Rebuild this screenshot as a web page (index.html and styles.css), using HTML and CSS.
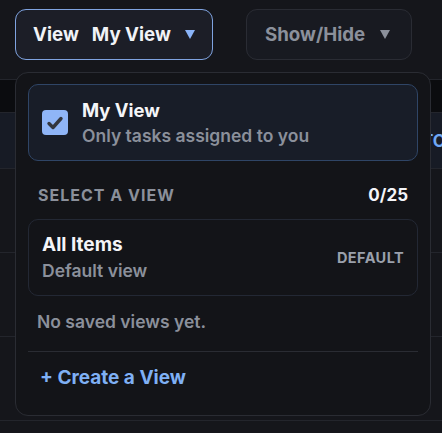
FILE: index.html
```html
<!DOCTYPE html>
<html lang="en">
<head>
    <meta charset="UTF-8">
    <meta name="viewport" content="width=device-width, initial-scale=1.0">
    <title>Views</title>
    <link rel="stylesheet" href="styles.css">
</head>
<body>
    <div class="page">
        <div class="toolbar">
            <button class="tool-button view-button">
                <span class="label">View</span>
                <span class="label">My View</span>
                <span class="caret blue"></span>
            </button>
            <button class="tool-button show-button">
                <span class="label">Show/Hide</span>
                <span class="caret"></span>
            </button>
        </div>

        <div class="table">
            <div class="table-head"></div>
            <div class="table-row active"><span class="status">TO</span></div>
            <div class="table-row"></div>
            <div class="table-row"></div>
            <div class="table-row"></div>
        </div>

        <div class="menu">
            <div class="current-view">
                <span class="checkbox">
                    <svg width="18" height="16" viewBox="0 0 18 16">
                        <path d="M3 8.5 L7 12.5 L15 3.5" fill="none" stroke="#33363e" stroke-width="3.4" stroke-linecap="round" stroke-linejoin="round"/>
                    </svg>
                </span>
                <div class="view-text">
                    <div class="view-title">My View</div>
                    <div class="view-sub">Only tasks assigned to you</div>
                </div>
            </div>

            <div class="section-head">
                <span class="section-title">SELECT A VIEW</span>
                <span class="count">0/25</span>
            </div>

            <div class="view-card">
                <div class="view-text">
                    <div class="view-title">All Items</div>
                    <div class="view-sub">Default view</div>
                </div>
                <span class="tag">DEFAULT</span>
            </div>

            <div class="empty">No saved views yet.</div>

            <div class="menu-footer">
                <a class="create-link">+ Create a View</a>
            </div>
        </div>
    </div>
</body>
</html>
```

FILE: styles.css
```css
body {
    margin: 0;
    background: #15161b;
    font-family: Inter, "Noto Sans", sans-serif;
    height: 433px;
    overflow: hidden;
}

.page {
    position: relative;
}

.toolbar {
    display: flex;
    gap: 33px;
    padding: 9px 15px 0;
    height: 51px;
}

.tool-button {
    display: flex;
    align-items: center;
    height: 51px;
    border-radius: 11px;
    font-family: inherit;
    font-size: 18.7px;
    font-weight: 700;
    cursor: pointer;
}

.view-button {
    width: 198px;
    padding: 0 0 0 17px;
    gap: 13px;
    background: #1c1e27;
    border: 1px solid #7fa3e0;
    color: #f1f3f7;
}

.show-button {
    width: 166px;
    padding: 0 0 0 18px;
    gap: 15px;
    background: #181a21;
    border: 1px solid #2a2c34;
    color: #8b909b;
}

.caret {
    width: 0;
    height: 0;
    border-left: 5px solid transparent;
    border-right: 5px solid transparent;
    border-top: 9px solid #8b909b;
}

.caret.blue {
    border-top-color: #8ab4f8;
    margin-left: 1px;
}

.table {
    margin-top: 19px;
    border-top: 1px solid #23252c;
}

.table-head {
    height: 32px;
    background: #0b0c0f;
    border-bottom: 1px solid #23252c;
}

.table-row {
    height: 83px;
    border-bottom: 1px solid #23252c;
    position: relative;
}

.table-row.active {
    height: 55px;
    background: #171b25;
}

.status {
    position: absolute;
    left: 422px;
    top: 18px;
    color: #6fa8f5;
    font-size: 17px;
    font-weight: 700;
}

.menu {
    position: absolute;
    left: 15px;
    top: 72px;
    width: 390px;
    padding: 11px 12px 0;
    height: 331px;
    background: #131418;
    border: 1px solid #2a2c33;
    border-radius: 13px;
}

.current-view {
    display: flex;
    align-items: center;
    gap: 14px;
    height: 75px;
    padding: 0 13px;
    background: #181d28;
    border: 1px solid #2f4566;
    border-radius: 10px;
}

.checkbox {
    width: 26px;
    height: 25px;
    border-radius: 4px;
    background: #8fb5f7;
    display: flex;
    align-items: center;
    justify-content: center;
    flex-shrink: 0;
}

.view-title {
    color: #f4f5f8;
    font-size: 18.4px;
    font-weight: 700;
    line-height: 22px;
}

.view-sub {
    color: #8b909b;
    font-size: 17.5px;
    font-weight: 600;
    line-height: 20px;
    margin-top: 5px;
}

.section-head {
    display: flex;
    justify-content: space-between;
    align-items: baseline;
    padding: 24px 10px 0;
    height: 34px;
}

.section-title {
    color: #8b909b;
    font-size: 16px;
    font-weight: 700;
    letter-spacing: 1px;
}

.count {
    color: #f4f5f8;
    font-size: 17px;
    font-weight: 700;
}

.view-card {
    display: flex;
    align-items: center;
    justify-content: space-between;
    height: 75px;
    padding: 0 13px 0 13px;
    border: 1px solid #232834;
    border-radius: 10px;
}

.view-card .view-title {
    font-size: 19px;
}

.tag {
    color: #9aa0ab;
    font-size: 14.5px;
    font-weight: 700;
    letter-spacing: 0.4px;
}

.empty {
    color: #8b909b;
    font-size: 17.5px;
    font-weight: 600;
    padding: 15px 9px 0;
    height: 40px;
    border-bottom: 1px solid #2a2c33;
}

.menu-footer {
    padding: 14px 12px;
}

.create-link {
    color: #7fb0f5;
    font-size: 19px;
    font-weight: 700;
    cursor: pointer;
}
```
